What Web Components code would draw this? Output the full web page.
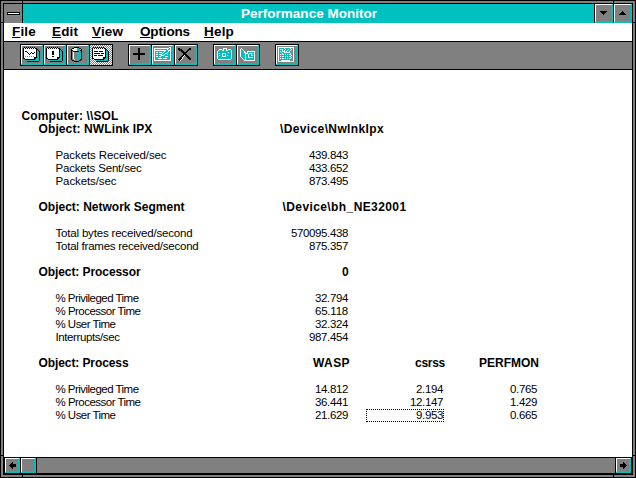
<!DOCTYPE html>
<html lang="en">
<head>
<meta charset="utf-8">
<title>Performance Monitor</title>
<style>
html,body{margin:0;width:636px;height:478px;overflow:hidden;background:#fff}
body{font-family:"Liberation Sans",Arial,sans-serif;color:#000;--teal:#00c0c0;--gray:#808080}
</style>
</head>
<body>
<pm-window></pm-window>
<script>
/* Text set to a given width through letter spacing. */
class FitText extends HTMLElement{
  constructor(){super();this.attachShadow({mode:'open'}).innerHTML=
    '<style>:host{display:block;white-space:pre}span{display:inline-block}</style><span><slot></slot></span>';}
  connectedCallback(){
    const s=this.shadowRoot.querySelector('span'),w=+this.getAttribute('w');
    if(!w)return;
    const n=this.textContent.length,d=(w-s.getBoundingClientRect().width)/n;
    s.style.letterSpacing=d.toFixed(3)+'px';
  }
}

/* Bitmap glyphs: k black, w white, c teal, g gray. */
const pad=(rows)=>[
" k k k k k k     ",
"kwkwkwkwkwkwkk   ",
"kwwwwwwwwwwwwkk  ",
"kwwwwwwwwwwwwkck ",
...rows.map(r=>"k"+r+"wkcck"),
"kwwwwwwwwwwkkkcck",
"kkwwwwwwwwwkkccck",
"  kkkkkkkkkkcccck",
"   ccccccccccccck",
"    kkkkkkkkkkkk "];
const ART={
chart:pad(["wkkwwwwwwww","wwwkwwwkwwk","wwwwkwkwkkw","wwwwwkwwwww","wwwwwwwwwww","wcwcwcwcwcw"]),
alert:pad(["wwwwwkkwwww","wwwwwkkwwww","wwwwwkkwwww","wwwwwkkwwww","wwwwwwwwwww","wwwwwkkwwww"]),
log:[
"   kkkkk    ",
" kkwwwcckk  ",
"kwwwwwcccck ",
"kkwwwwccckk ",
"kgkkkkkkcck ",
"kgwgggcccck ",
"kgwgggcccck ",
"kgwgggcccck ",
"kgwgggcccck ",
"kgwgggcccck ",
"kgwgggcccck ",
"kgwgggcccck ",
"kggwggccckk ",
" kkgggcckk  ",
"   kkkkk    "],
report:pad(["wkkkkwkkkkw","wwwwwwwwwww","wkkkkkkwkkk","wwwwwwwwwww","wkkkwkkkkkw","wwwwwwwwwww"]),
add:[
"     kk     ",
"     kk     ",
"     kk     ",
"     kk     ",
"     kk     ",
"kkkkkkkkkkkk",
"kkkkkkkkkkkk",
"     kk     ",
"     kk     ",
"     kk     ",
"     kk     ",
"     kk     "],
edit:[
"               ww",
"wwwwwwwwwwwwwwwcw",
"wccccccccccccwccw",
"wwwwwwwwwwwwccwww",
"wcccccccccwcccwcw",
"wcwwcwwwcwcccwccw",
"wcccccccwccwwcccw",
"wcwwcwwwccwccwccw",
"wccccccwwwccccccw",
"wcwwcwwccccwwwccw",
"wcccccccccccccccw",
"wcccwwwwcwwwwcccw",
"wcccccccccccccccw",
"wwwwwwwwwwwwwwwww"],
remove:[
"kk         kk ",
"kkkk      kkk ",
" kkkk    kk   ",
"   kkk  kk    ",
"    kkkkk     ",
"     kkk      ",
"     kkkk     ",
"    kkwkkk    ",
"   kkw  kkk   ",
"  kkw    kkk  ",
" kkkw     kkk ",
"kkkw       kk ",
" kw           "],
camera:[
"      wwww     ",
"  www wccw www ",
" wcccwwccwwcccw",
"wcccccccccccccw",
"wccccccccccwccw",
"wcwccwwwwccccgw",
"wccccwccwcccccw",
"wcwccwccwcwcccw",
"wccccwwwwcccccw",
"wcccccccccccccw",
"wcccccccccccccw",
" wwwwwwwwwwwww "],
bookmark:[
" w             ",
"wcw            ",
"wccw           ",
"wcccw  wwwwwwww",
"wcccww wccccccw",
"wccccwwwcwwwwcw",
"wccccwccwccwccw",
"wccccwccwccwwcw",
"wccccwccwcccccw",
" wcccwccwwwwwcw",
"  wccwccccccccw",
"   wcwccccccccw",
"    wwwwwwwwwww"],
options:[
"wwwwwwwwwwwwwwww",
"wcccccwcccccwcgw",
"wcwwwccwccwccwgw",
"wcccwcwccwccwcgw",
"wcwcwwwcwccwccgw",
"wccwccwwwwwwccgw",
"wcccwcccccccwcgw",
"wcwcwwcwcwcwwcgw",
"wccccccccccccwgw",
"wcwcwwcwcwcwwcgw",
"wccccccccccccwgw",
"wcwcwwcwcwcwwcgw",
"wcccccccccccccgw",
"wccwwwwwwwwwccgw",
"wwwwwwwwwwwwwwww"],
down:["kkkkkkk"," kkkkk ","  kkk  ","   k   "],
up:["   k   ","  kkk  "," kkkkk ","kkkkkkk"],
left:["        ","    k   ","   kk   ","  kkkkkk"," kkkkkkk","  kkkkkk","   kk   ","    k   "],
right:["        ","    k   ","    kk  "," kkkkkk "," kkkkkkk"," kkkkkk ","    kk  ","    k   "]
};
/* Odd sizes centre on whole pixels in toolbar and title buttons; scroll arrows are 8 by 8. */
class PixelIcon extends HTMLElement{
  connectedCallback(){
    const n=this.getAttribute('name'),rows=ART[n],even=n==='left'||n==='right';
    let W=Math.max(...rows.map(r=>r.length)),H=rows.length;
    if(!even){W|=1;H|=1}
    const C={k:'#000',w:'#fff',c:'var(--teal)',g:'var(--gray)'},P={};
    rows.forEach((r,y)=>[...r].forEach((c,x)=>{if(C[c])P[c]=(P[c]||'')+`M${x} ${y}h1v1h-1z`;}));
    this.attachShadow({mode:'open'}).innerHTML='<style>:host{display:block}svg{display:block}</style>'+
      `<svg width="${W}" height="${H}" shape-rendering="crispEdges">`+
      Object.keys(P).map(c=>`<path d="${P[c]}" style="fill:${C[c]}"/>`).join('')+'</svg>';
  }
}

/* Raised button with a white and teal bevel. */
class PmButton extends HTMLElement{
  constructor(){super();this.attachShadow({mode:'open'}).innerHTML=`<style>
:host{display:flex;box-sizing:border-box;align-items:center;justify-content:center;background:var(--gray);
 border:solid;border-width:1px 2px 2px 1px;border-color:#fff var(--teal) var(--teal) #fff}
:host([pressed]){border-color:transparent;background:repeating-conic-gradient(#fff 0 25%,var(--gray) 0 50%) 0 0/2px 2px border-box}
</style><slot></slot>`;}
}

class PmTitle extends HTMLElement{
  constructor(){super();this.attachShadow({mode:'open'}).innerHTML=`<style>
:host{display:grid;grid-template-columns:18px 571px 18px 18px;column-gap:1px;height:18px;background:#000}
.sys{background:var(--gray);display:flex;align-items:center;justify-content:center}
.sys i{width:11px;height:1px;background:#fff;border:1px solid #000;box-shadow:1px 1px var(--teal)}
.t{background:var(--teal);color:#fff;font:bold 13.5px/19px "Liberation Sans",Arial,sans-serif;padding-left:218px}
</style><div class="sys"><i></i></div><div class="t"><fit-text w="136">Performance Monitor</fit-text></div>
<pm-button><pixel-icon name="down"></pixel-icon></pm-button><pm-button><pixel-icon name="up"></pixel-icon></pm-button>`;}
}

class PmMenu extends HTMLElement{
  constructor(){super();
    const items=[['File',24,16],['Edit',26,14],['View',31,17],['Options',50,14],['Help',30,0]];
    this.attachShadow({mode:'open'}).innerHTML=`<style>
:host{display:flex;height:18px;background:#fff;padding-left:8px;font:bold 13.5px/17px "Liberation Sans",Arial,sans-serif}
u{text-decoration-thickness:1px;text-underline-offset:1px}
</style>`+items.map(([t,w,g])=>`<fit-text w="${w}" style="width:${w}px;margin-right:${g}px"><u>${t[0]}</u>${t.slice(1)}</fit-text>`).join('');}
}

class PmToolbar extends HTMLElement{
  constructor(){super();
    const groups=[['chart','alert','log','report'],['add','edit','remove'],['camera','bookmark'],['options']];
    this.attachShadow({mode:'open'}).innerHTML=`<style>
:host{display:flex;box-sizing:border-box;height:27px;background:var(--gray);padding:2px 0 0 16px;gap:15px;align-items:flex-start}
div{display:flex;gap:1px;padding:1px;background:#000}
pm-button{width:22px;height:20px}
</style>`+groups.map(g=>'<div>'+g.map(n=>`<pm-button${n==='report'?' pressed':''}><pixel-icon name="${n}"></pixel-icon></pm-button>`).join('')+'</div>').join('');}
}

/* One report line: a label and up to three values. */
class PmRow extends HTMLElement{
  constructor(){super();this.attachShadow({mode:'open'}).innerHTML=`<style>
:host{display:grid;grid-template-columns:276px 69px 95px 94px;height:13px;font-size:11.5px;line-height:13px}
:host([head]){font-weight:bold;font-size:12px}
::slotted(*){justify-self:end;white-space:pre}
::slotted(:first-child),::slotted([wide]){justify-self:start}
::slotted([sel]){box-sizing:border-box;width:78px;text-align:right;outline:1px dotted #000;outline-offset:-1px}
</style><slot></slot>`;}
}

class PmReport extends HTMLElement{
  constructor(){super();
    const N=null,L=[
    ['h',17.5,'Computer: \\\\SOL',97],
    ['h',34.5,'Object: NWLink IPX',114,['\\Device\\NwlnkIpx',104,0]],N,
    ['',51.5,'Packets Received/sec',111,'439.843'],
    ['',51.5,'Packets Sent/sec',86,'433.652'],
    ['',51.5,'Packets/sec',61,'873.495'],N,
    ['h',34.5,'Object: Network Segment',146,['\\Device\\bh_NE32001',124,2.5]],N,
    ['',51.5,'Total bytes received/second',137,'570095.438'],
    ['',51.5,'Total frames received/second',143,'875.357'],N,
    ['h',34.5,'Object: Processor',102,'0'],N,
    ['',51.5,'% Privileged Time',83,'32.794'],
    ['',51.5,'% Processor Time',85,'65.118'],
    ['',51.5,'% User Time',60,'32.324'],
    ['',51.5,'Interrupts/sec',64,'987.454'],N,
    ['h',34.5,'Object: Process',90,['WASP',37],['csrss',30],['PERFMON',60]],N,
    ['',51.5,'% Privileged Time',83,'14.812','2.194','0.765'],
    ['',51.5,'% Processor Time',85,'36.441','12.147','1.429'],
    ['',51.5,'% User Time',60,'21.629','*9.953','0.665']];
    const val=(v,h)=>{
      if(Array.isArray(v))return `<fit-text w="${v[1]}" ${v[2]!==undefined?`wide style="margin-left:${v[2]}px"`:'style="margin-right:-1px"'}>${v[0]}</fit-text>`;
      const sel=v[0]==='*',t=sel?v.slice(1):v;
      return `<fit-text ${sel?'sel':''} w="${h?7:t.length*6-3}" style="${h?'':'padding-right:1px'}">${t}</fit-text>`;};
    this.attachShadow({mode:'open'}).innerHTML=`<style>
:host{display:block;box-sizing:border-box;height:387px;background:#fff;padding-top:40px}
</style>`+L.map(r=>r?`<pm-row ${r[0]?'head':''}><fit-text w="${r[3]}" style="margin-left:${r[1]}px">${r[2]}</fit-text>${r.slice(4).map(v=>val(v,r[0])).join('')}</pm-row>`:'<pm-row></pm-row>').join('');}
}

class PmScroll extends HTMLElement{
  constructor(){super();this.attachShadow({mode:'open'}).innerHTML=`<style>
:host{display:grid;grid-template-columns:15px 15px 1fr 15px;column-gap:1px;box-sizing:border-box;height:16px;background:#000;border:solid #000;border-width:0 1px 1px}
.track{background:var(--gray)}
</style><pm-button><pixel-icon name="left"></pixel-icon></pm-button><pm-button></pm-button><div class="track"></div><pm-button><pixel-icon name="right"></pixel-icon></pm-button>`;}
}

class PmWindow extends HTMLElement{
  constructor(){super();this.attachShadow({mode:'open'}).innerHTML=`<style>
:host{display:block;position:relative;box-sizing:border-box;width:636px;height:478px;border:1px solid #000;background:var(--gray);padding:2px}
.in{display:grid;grid-template-rows:18px 18px 27px 387px 16px;row-gap:1px;background:#000;border:1px solid #000}
i{position:absolute;background:#000}
.v{width:1px;height:2px}.h{height:1px;width:2px}
</style><div class="in"><pm-title></pm-title><pm-menu></pm-menu><pm-toolbar></pm-toolbar><pm-report></pm-report><pm-scroll></pm-scroll></div>
<i class="v" style="left:21px;top:0"></i><i class="v" style="right:21px;top:0"></i>
<i class="v" style="left:21px;bottom:0"></i><i class="v" style="right:21px;bottom:0"></i>
<i class="h" style="left:0;top:21px"></i><i class="h" style="right:0;top:21px"></i>
<i class="h" style="left:0;bottom:21px"></i><i class="h" style="right:0;bottom:21px"></i>`;}
}
for(const [n,c] of Object.entries({'pixel-icon':PixelIcon,'pm-button':PmButton,'pm-row':PmRow,'pm-title':PmTitle,'pm-menu':PmMenu,'pm-toolbar':PmToolbar,'pm-report':PmReport,'pm-scroll':PmScroll,'pm-window':PmWindow,'fit-text':FitText}))customElements.define(n,c);
</script>
</body>
</html>
